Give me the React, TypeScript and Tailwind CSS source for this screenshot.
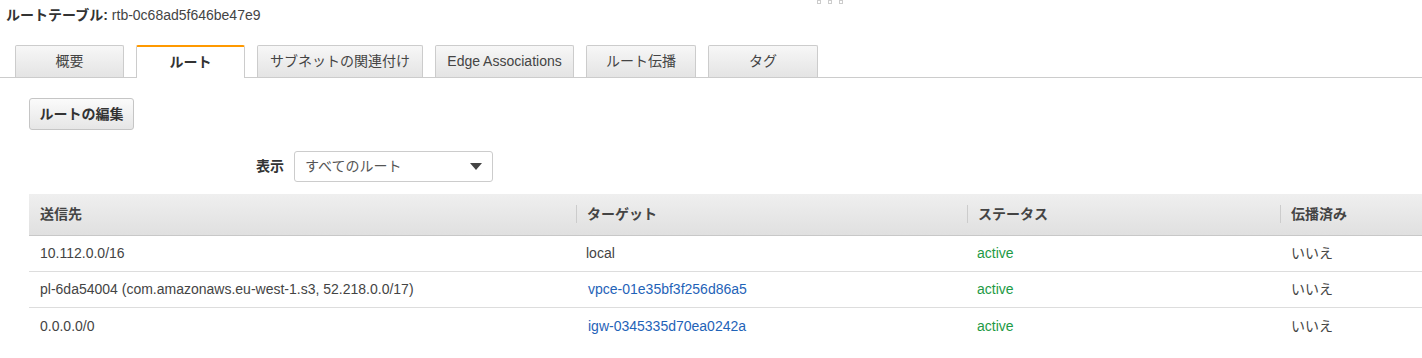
const tabs = [
  { label: '概要', w: 'w-[109px]' },
  { label: 'ルート', w: 'w-[109px]', active: true },
  { label: 'サブネットの関連付け', w: 'w-[166px]' },
  { label: 'Edge Associations', w: 'w-[139px]' },
  { label: 'ルート伝播', w: 'w-[110px]' },
  { label: 'タグ', w: 'w-[110px]' },
]

const routes = [
  { dest: '10.112.0.0/16', target: 'local', link: false },
  { dest: 'pl-6da54004 (com.amazonaws.eu-west-1.s3, 52.218.0.0/17)', target: 'vpce-01e35bf3f256d86a5', link: true },
  { dest: '0.0.0.0/0', target: 'igw-0345335d70ea0242a', link: true },
]

const cols = 'grid grid-cols-[547px_391px_313px_1fr]'

function Tab({ label, w, active }: { label: string; w: string; active?: boolean }) {
  if (active) {
    return (
      <div className={`${w} h-[33px] -mb-px flex items-center justify-center bg-white border border-b-0 border-[#ccc] border-t-2 border-t-[#ff9900] rounded-t-[2px] font-bold text-[#333]`}>
        {label}
      </div>
    )
  }
  return (
    <div className={`${w} h-[32px] flex items-center justify-center whitespace-nowrap bg-linear-to-b from-[#f7f7f7] to-[#e4e4e4] border border-b-0 border-[#ccc] rounded-t-[2px] text-[#444]`}>
      {label}
    </div>
  )
}

function HeadCell({ label, divider }: { label: string; divider?: boolean }) {
  return (
    <div className="relative flex items-center pl-[11px] font-bold text-[#444]">
      {divider && <span className="absolute left-0 top-[11px] h-[18px] w-px bg-[#ccc]" />}
      {label}
    </div>
  )
}

export default function App() {
  return (
    <div className="relative w-[1422px] h-[358px] overflow-hidden bg-white text-[14px] text-[#444] font-['Liberation_Sans','Noto_Sans_CJK_JP',sans-serif]">
      {/* drag handle */}
      <div className="absolute top-0 left-[817px] flex gap-[7px]">
        <span className="w-[4px] h-[4px] border border-[#ccc]" />
        <span className="w-[4px] h-[4px] border border-[#ccc]" />
        <span className="w-[4px] h-[4px] border border-[#ccc]" />
      </div>

      <div className="h-[30px] pl-[6px] flex items-center">
        <span className="font-bold text-[#333]">ルートテーブル:</span>
        <span className="ml-[4px] text-[#444]">rtb-0c68ad5f646be47e9</span>
      </div>

      <div className="mt-[15px] h-[33px] pl-[15px] flex items-end gap-[12px] border-b border-[#ccc]">
        {tabs.map(t => <Tab key={t.label} {...t} />)}
      </div>

      <div className="pl-[29px]">
        <button className="mt-[20px] w-[105px] h-[32px] rounded-[3px] border border-[#c5c5c5] bg-linear-to-b from-[#fbfbfb] to-[#e6e6e6] font-bold text-[#333]">
          ルートの編集
        </button>

        <div className="mt-[21px] ml-[227px] flex items-center gap-[10px]">
          <span className="font-bold text-[#333]">表示</span>
          <div className="w-[199px] h-[31px] pl-[10px] pr-[9px] flex items-center justify-between rounded-[3px] border border-[#ccc] bg-white text-[#555]">
            <span>すべてのルート</span>
            <svg width="12" height="7" viewBox="0 0 12 7" className="mr-[1px]">
              <path d="M0 0h12L6 7z" fill="#444" />
            </svg>
          </div>
        </div>

        <div className="mt-[12px]">
          <div className={`${cols} h-[42px] bg-linear-to-b from-[#efefef] to-[#e0e0e0] border-b border-[#c8c8c8]`}>
            <HeadCell label="送信先" />
            <HeadCell label="ターゲット" divider />
            <HeadCell label="ステータス" divider />
            <HeadCell label="伝播済み" divider />
          </div>
          {routes.map((r, i) => (
            <div key={r.dest} className={`${cols} h-[36px] ${i < routes.length - 1 ? 'border-b border-[#ddd]' : ''}`}>
              <div className="flex items-center pl-[11px]">{r.dest}</div>
              <div className="flex items-center pl-[10px]">
                {r.link ? <span className="ml-[2px] text-[#1f63b8]">{r.target}</span> : r.target}
              </div>
              <div className="flex items-center pl-[10px] text-[#1d9a45]">active</div>
              <div className="flex items-center pl-[11px]">いいえ</div>
            </div>
          ))}
        </div>
      </div>
    </div>
  )
}
